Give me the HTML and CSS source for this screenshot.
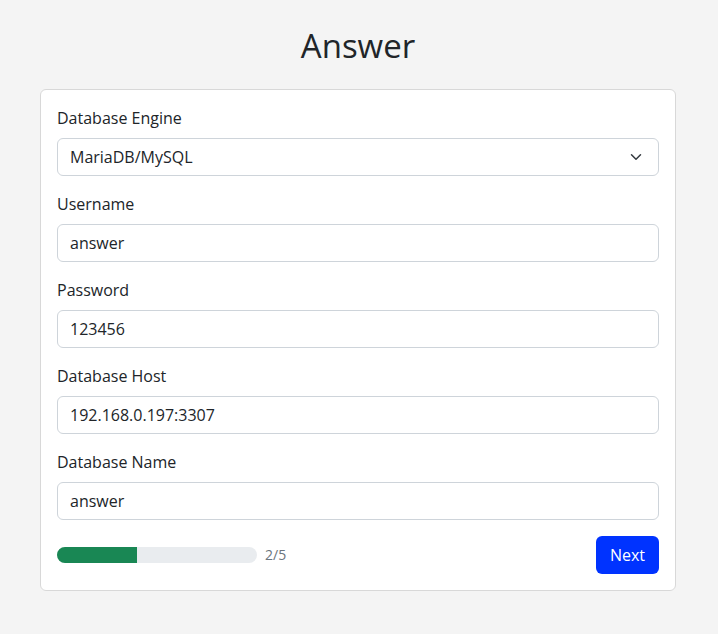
FILE: index.html
```html
<!DOCTYPE html>
<html lang="en">
<head>
<meta charset="utf-8">
<title>Answer</title>
<link rel="stylesheet" href="styles.css">
</head>
<body>
<main class="page">
  <h1 class="title">Answer</h1>
  <div class="card">
    <form class="card-body">
      <div class="field">
        <label class="label">Database Engine</label>
        <div class="select">
          <span>MariaDB/MySQL</span>
          <svg class="chev" width="16" height="16" viewBox="0 0 16 16"><path d="m2 5 6 6 6-6" fill="none" stroke="#343a40" stroke-width="2" stroke-linecap="round" stroke-linejoin="round"/></svg>
        </div>
      </div>
      <div class="field">
        <label class="label">Username</label>
        <div class="input">answer</div>
      </div>
      <div class="field">
        <label class="label">Password</label>
        <div class="input">123456</div>
      </div>
      <div class="field">
        <label class="label">Database Host</label>
        <div class="input">192.168.0.197:3307</div>
      </div>
      <div class="field">
        <label class="label">Database Name</label>
        <div class="input">answer</div>
      </div>
      <div class="footer">
        <div class="progress-wrap">
          <div class="progress"><div class="bar" style="width:40%"></div></div>
          <span class="step">2/5</span>
        </div>
        <button type="button" class="btn">Next</button>
      </div>
    </form>
  </div>
</main>
</body>
</html>
```

FILE: styles.css
```css
* { box-sizing: border-box; }
html, body { margin: 0; padding: 0; }
body {
  background: #f4f4f4;
  font-family: "Open Sans", "Noto Sans", sans-serif;
  font-size: 16px;
  line-height: 24px;
  color: #212529;
}
.page {
  width: 636px;
  margin: 0 40px;
  padding-top: 27px;
}
.title {
  margin: 0 0 24px;
  text-align: center;
  font-weight: 400;
  font-size: 33px;
  line-height: 38px;
  color: #212529;
}
.card {
  background: #fff;
  border: 1px solid #d8d8d8;
  border-radius: 6px;
}
.card-body {
  padding: 16px;
  margin: 0;
}
.field { margin-bottom: 16px; }
.label {
  display: block;
  margin-bottom: 8px;
  line-height: 24px;
}
.input, .select {
  height: 38px;
  border: 1px solid #ced4da;
  border-radius: 6px;
  padding: 6px 12px;
  line-height: 24px;
  background: #fff;
}
.select {
  display: flex;
  align-items: center;
  justify-content: space-between;
  padding-right: 14px;
}
.chev { display: block; width: 16px; height: 12px; }
.footer {
  display: flex;
  align-items: center;
  justify-content: space-between;
}
.progress-wrap {
  display: flex;
  align-items: center;
  gap: 8px;
}
.progress {
  width: 200px;
  height: 16px;
  background: #e9ecef;
  border-radius: 8px;
  overflow: hidden;
}
.bar { height: 100%; background: #198754; }
.step { font-size: 14px; color: #6c757d; line-height: 20px; }
.btn {
  height: 38px;
  padding: 6px 14px;
  border: 0;
  border-radius: 6px;
  background: #0033ff;
  color: #fff;
  font-family: inherit;
  font-size: 16px;
  line-height: 24px;
}
```
